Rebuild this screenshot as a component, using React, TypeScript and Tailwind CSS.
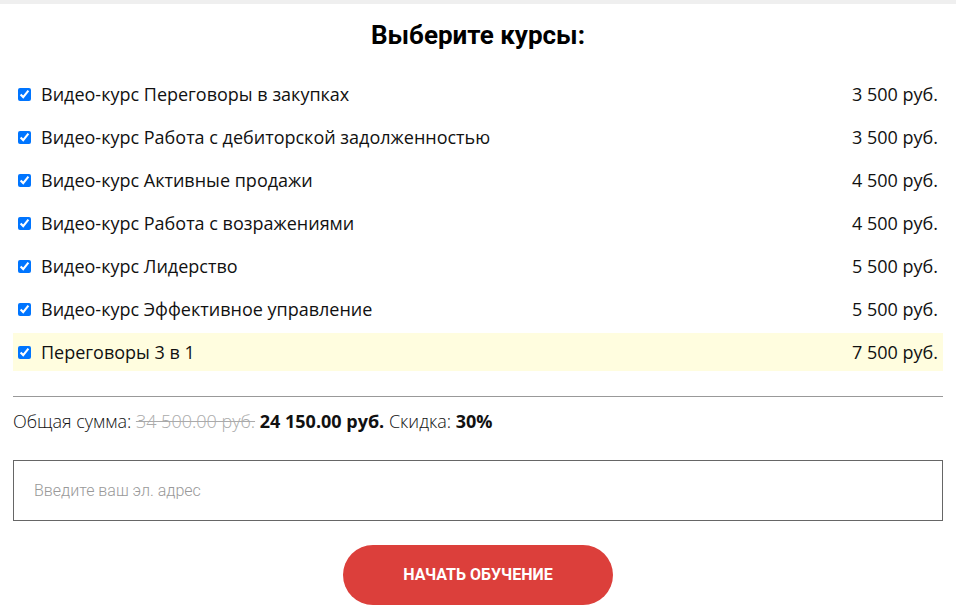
import { useState } from "react"

const courses = [
  { name: "Видео-курс Переговоры в закупках", price: "3 500 руб." },
  { name: "Видео-курс Работа с дебиторской задолженностью", price: "3 500 руб." },
  { name: "Видео-курс Активные продажи", price: "4 500 руб." },
  { name: "Видео-курс Работа с возражениями", price: "4 500 руб." },
  { name: "Видео-курс Лидерство", price: "5 500 руб." },
  { name: "Видео-курс Эффективное управление", price: "5 500 руб." },
  { name: "Переговоры 3 в 1", price: "7 500 руб.", highlight: true },
]

export default function App() {
  const [checked, setChecked] = useState(courses.map(() => true))

  return (
    <div className="min-h-screen bg-white font-['Open_Sans',sans-serif] text-[#111]">
      <div className="h-[4px] bg-[#efefef]" />
      <div className="px-[13px]">
        <h2 className="pt-[17px] text-center font-['Roboto',sans-serif] text-[26px] font-bold leading-[28px] text-black">
          Выберите курсы:
        </h2>

        <div className="mt-[26px] flex flex-col gap-[5px]">
          {courses.map((c, i) => (
            <label
              key={c.name}
              className={`flex h-[38px] items-center justify-between pl-[5px] pr-[5px] ${c.highlight ? "bg-[#fffddf]" : ""}`}
            >
              <span className="flex items-center">
                <input
                  type="checkbox"
                  checked={checked[i]}
                  onChange={() => setChecked(checked.map((v, j) => (j === i ? !v : v)))}
                  className="m-0 h-[13px] w-[13px] accent-[#0075ff]"
                />
                <span className="ml-[10px] text-[18px]">{c.name}</span>
              </span>
              <span className="text-[18px]">{c.price}</span>
            </label>
          ))}
        </div>

        <div className="mt-[25px] border-t border-[#999]" />

        <div className="mt-[12px] text-[18px] leading-[24px]">
          <span className="font-light">Общая сумма: </span>
          <span className="font-light text-[#aaa] line-through">34 500.00 руб.</span>{" "}
          <span className="font-bold">24 150.00 руб.</span>{" "}
          <span className="font-light">Скидка: </span>
          <span className="font-bold">30%</span>
        </div>

        <input
          type="text"
          placeholder="Введите ваш эл. адрес"
          className="mt-[27px] block h-[61px] w-full border border-[#666] px-[20px] font-['Roboto',sans-serif] text-[16px] font-light outline-none placeholder:text-[#999]"
        />

        <div className="mt-[24px] flex justify-center">
          <button className="h-[60px] w-[270px] rounded-full bg-[#dc3f3b] font-['Roboto',sans-serif] text-[16px] font-bold uppercase text-white">
            Начать обучение
          </button>
        </div>
      </div>
    </div>
  )
}
